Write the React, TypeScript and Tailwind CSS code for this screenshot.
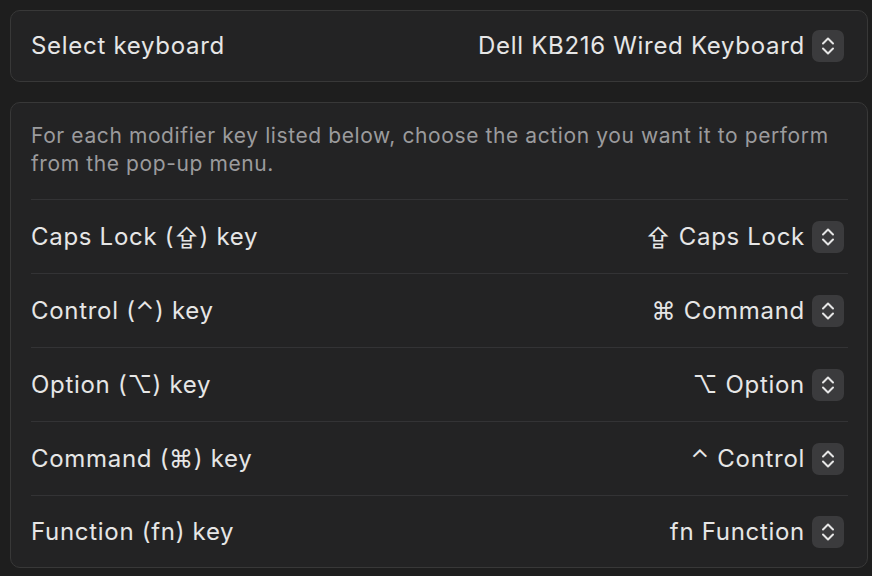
const Stepper = () => (
  <div className="w-8 h-8 rounded-[7px] bg-[#3b3b3d] flex items-center justify-center">
    <svg width="16" height="22" viewBox="0 0 16 22" fill="none">
      <path d="M3 8.5 L8 3.5 L13 8.5" stroke="#e6e6e6" strokeWidth="2" strokeLinecap="round" strokeLinejoin="round" />
      <path d="M3 13.5 L8 18.5 L13 13.5" stroke="#e6e6e6" strokeWidth="2" strokeLinecap="round" strokeLinejoin="round" />
    </svg>
  </div>
);

const rows = [
  { label: "Caps Lock (⇪) key", value: "⇪ Caps Lock" },
  { label: "Control (⌃) key", value: "⌘ Command" },
  { label: "Option (⌥) key", value: "⌥ Option" },
  { label: "Command (⌘) key", value: "⌃ Control" },
  { label: "Function (fn) key", value: "fn Function" },
];

export default function App() {
  return (
    <div
      className="w-[872px] h-[576px] bg-[#1e1e1e] text-[#e6e6e6] pt-[10px] pl-[10px] pr-[4px]"
      style={{ fontFamily: "Inter, 'DejaVu Sans', sans-serif" }}
    >
      <div className="h-[72px] rounded-[10px] border border-[#383838] bg-[#232324] flex items-center justify-between pl-[20px] pr-[23px]">
        <span className="text-[24px] tracking-[0.7px]">Select keyboard</span>
        <div className="flex items-center gap-[7px]">
          <span className="text-[24px] tracking-[0.7px]">Dell KB216 Wired Keyboard</span>
          <Stepper />
        </div>
      </div>

      <div className="mt-[20px] h-[466px] rounded-[10px] border border-[#383838] bg-[#232324] flex flex-col pl-[20px] pr-[19px]">
        <p className="pt-[19px] pb-[21px] text-[21px] leading-[28px] tracking-[0.6px] text-[#9b9b9d] pr-[10px]">
          For each modifier key listed below, choose the action you want it to perform from the pop-up menu.
        </p>
        {rows.map((r, i) => (
          <div
            key={r.label}
            className={
              i === rows.length - 1
                ? "h-[72px] border-t border-[#333335] flex items-center justify-between pr-[4px]"
                : "h-[74px] border-t border-[#333335] flex items-center justify-between pr-[4px]"
            }
          >
            <span className="text-[24px] tracking-[0.7px]">{r.label}</span>
            <div className="flex items-center gap-[7px]">
              <span className="text-[24px] tracking-[0.7px]">{r.value}</span>
              <Stepper />
            </div>
          </div>
        ))}
      </div>
    </div>
  );
}
